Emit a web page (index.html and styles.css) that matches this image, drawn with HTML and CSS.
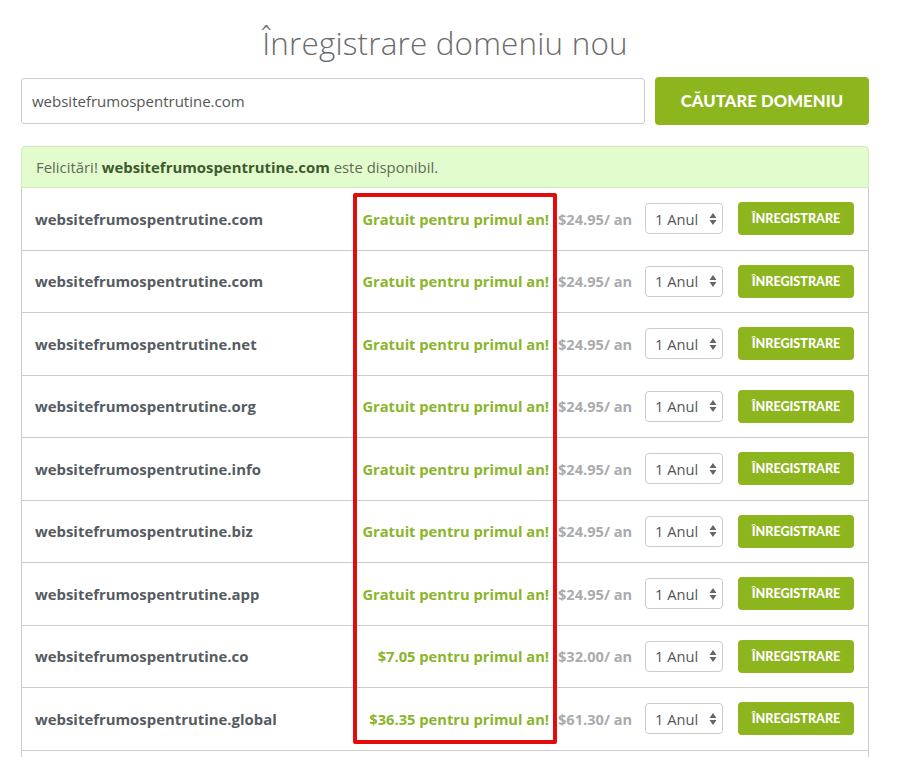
FILE: index.html
```html
<!DOCTYPE html>
<html lang="ro">
<head>
    <meta charset="UTF-8">
    <meta name="viewport" content="width=device-width, initial-scale=1.0">
    <title>Înregistrare domeniu nou</title>
    <link rel="stylesheet" href="styles.css">
</head>
<body>

    <div class="page">
        <h1>Înregistrare domeniu nou</h1>

        <!-- cautare -->
        <div class="search">
            <div class="search-input">websitefrumospentrutine.com</div>
            <button class="btn btn-search">CĂUTARE DOMENIU</button>
        </div>

        <div class="alert">Felicitări! <strong>websitefrumospentrutine.com</strong> este disponibil.</div>

        <!-- rezultate -->
        <div class="results">
            <div class="row">
                <div class="name">websitefrumospentrutine.com</div>
                <div class="promo">Gratuit pentru primul an!</div>
                <div class="price">$24.95/ an</div>
                <div class="select">1 Anul <svg width="8" height="14" viewBox="0 0 8 14"><path d="M4 1L7.5 6H0.5z M4 13L0.5 8H7.5z" fill="#666"/></svg></div>
                <button class="btn btn-reg">ÎNREGISTRARE</button>
            </div>
            <div class="row">
                <div class="name">websitefrumospentrutine.com</div>
                <div class="promo">Gratuit pentru primul an!</div>
                <div class="price">$24.95/ an</div>
                <div class="select">1 Anul <svg width="8" height="14" viewBox="0 0 8 14"><path d="M4 1L7.5 6H0.5z M4 13L0.5 8H7.5z" fill="#666"/></svg></div>
                <button class="btn btn-reg">ÎNREGISTRARE</button>
            </div>
            <div class="row">
                <div class="name">websitefrumospentrutine.net</div>
                <div class="promo">Gratuit pentru primul an!</div>
                <div class="price">$24.95/ an</div>
                <div class="select">1 Anul <svg width="8" height="14" viewBox="0 0 8 14"><path d="M4 1L7.5 6H0.5z M4 13L0.5 8H7.5z" fill="#666"/></svg></div>
                <button class="btn btn-reg">ÎNREGISTRARE</button>
            </div>
            <div class="row">
                <div class="name">websitefrumospentrutine.org</div>
                <div class="promo">Gratuit pentru primul an!</div>
                <div class="price">$24.95/ an</div>
                <div class="select">1 Anul <svg width="8" height="14" viewBox="0 0 8 14"><path d="M4 1L7.5 6H0.5z M4 13L0.5 8H7.5z" fill="#666"/></svg></div>
                <button class="btn btn-reg">ÎNREGISTRARE</button>
            </div>
            <div class="row">
                <div class="name">websitefrumospentrutine.info</div>
                <div class="promo">Gratuit pentru primul an!</div>
                <div class="price">$24.95/ an</div>
                <div class="select">1 Anul <svg width="8" height="14" viewBox="0 0 8 14"><path d="M4 1L7.5 6H0.5z M4 13L0.5 8H7.5z" fill="#666"/></svg></div>
                <button class="btn btn-reg">ÎNREGISTRARE</button>
            </div>
            <div class="row">
                <div class="name">websitefrumospentrutine.biz</div>
                <div class="promo">Gratuit pentru primul an!</div>
                <div class="price">$24.95/ an</div>
                <div class="select">1 Anul <svg width="8" height="14" viewBox="0 0 8 14"><path d="M4 1L7.5 6H0.5z M4 13L0.5 8H7.5z" fill="#666"/></svg></div>
                <button class="btn btn-reg">ÎNREGISTRARE</button>
            </div>
            <div class="row">
                <div class="name">websitefrumospentrutine.app</div>
                <div class="promo">Gratuit pentru primul an!</div>
                <div class="price">$24.95/ an</div>
                <div class="select">1 Anul <svg width="8" height="14" viewBox="0 0 8 14"><path d="M4 1L7.5 6H0.5z M4 13L0.5 8H7.5z" fill="#666"/></svg></div>
                <button class="btn btn-reg">ÎNREGISTRARE</button>
            </div>
            <div class="row">
                <div class="name">websitefrumospentrutine.co</div>
                <div class="promo">$7.05 pentru primul an!</div>
                <div class="price">$32.00/ an</div>
                <div class="select">1 Anul <svg width="8" height="14" viewBox="0 0 8 14"><path d="M4 1L7.5 6H0.5z M4 13L0.5 8H7.5z" fill="#666"/></svg></div>
                <button class="btn btn-reg">ÎNREGISTRARE</button>
            </div>
            <div class="row">
                <div class="name">websitefrumospentrutine.global</div>
                <div class="promo">$36.35 pentru primul an!</div>
                <div class="price">$61.30/ an</div>
                <div class="select">1 Anul <svg width="8" height="14" viewBox="0 0 8 14"><path d="M4 1L7.5 6H0.5z M4 13L0.5 8H7.5z" fill="#666"/></svg></div>
                <button class="btn btn-reg">ÎNREGISTRARE</button>
            </div>
            <div class="row"></div>

            <!-- marcaj rosu peste coloana de promotii -->
            <div class="highlight"></div>
        </div>
    </div>

</body>
</html>
```

FILE: styles.css
```css
body { margin: 0; background: #fff; font-family: "Open Sans", "Liberation Sans", sans-serif; color: #555; overflow: hidden; }
.page { width: 848px; margin-left: 21px; }

h1 { margin: 0; padding-top: 23px; height: 56px; box-sizing: border-box; text-align: center; font-size: 31.4px; font-weight: 300; color: #6b6b6b; line-height: 40px; letter-spacing: 0.2px; }

/* cautare */
.search { display: flex; align-items: center; gap: 10px; margin-top: 21px; }
.search-input { flex: 1; height: 46px; box-sizing: border-box; border: 1px solid #ccc; border-radius: 3px; padding: 0 10px; line-height: 44px; font-size: 15px; color: #555; }
.btn { font-family: "Lato", "Liberation Sans", sans-serif; font-weight: 900; color: #fff; background: #8db51e; border: none; cursor: pointer; }
.btn-search { width: 214px; height: 48px; border-radius: 4px; font-size: 16.6px; letter-spacing: 0.1px; }

/* mesaj */
.alert { margin-top: 21px; height: 42px; box-sizing: border-box; padding: 0 14px; line-height: 40px; background: #e3fcce; border: 1px solid #cfe9bb; border-radius: 4px 4px 0 0; font-size: 14.9px; color: #5d6d54; }
.alert strong { color: #3d5a2d; }

/* rezultate */
.results { position: relative; border-left: 1px solid #ccc; border-right: 1px solid #ccc; }
.row { display: flex; align-items: center; height: 62.5px; box-sizing: border-box; border-bottom: 1px solid #ccc; padding: 0 14px 0 13px; }
.name { flex: 1; font-weight: 700; font-size: 14.9px; color: #555b62; }
.promo { margin-right: 9px; font-weight: 700; font-size: 14.7px; color: #8ab52c; }
.price { width: 87px; font-weight: 700; font-size: 14.6px; color: #a9abad; }
.select { width: 78px; height: 31px; box-sizing: border-box; border: 1px solid #ccc; border-radius: 4px; margin-right: 15px; padding: 0 5px 0 9px; display: flex; align-items: center; justify-content: space-between; font-size: 14.7px; color: #555; }
.btn-reg { width: 116px; height: 33px; border-radius: 4px; font-size: 12.6px; }

.highlight { position: absolute; left: 331px; top: 5px; width: 204px; height: 551px; box-sizing: border-box; border: 4px solid #e30b0b; border-radius: 2px; }
```
